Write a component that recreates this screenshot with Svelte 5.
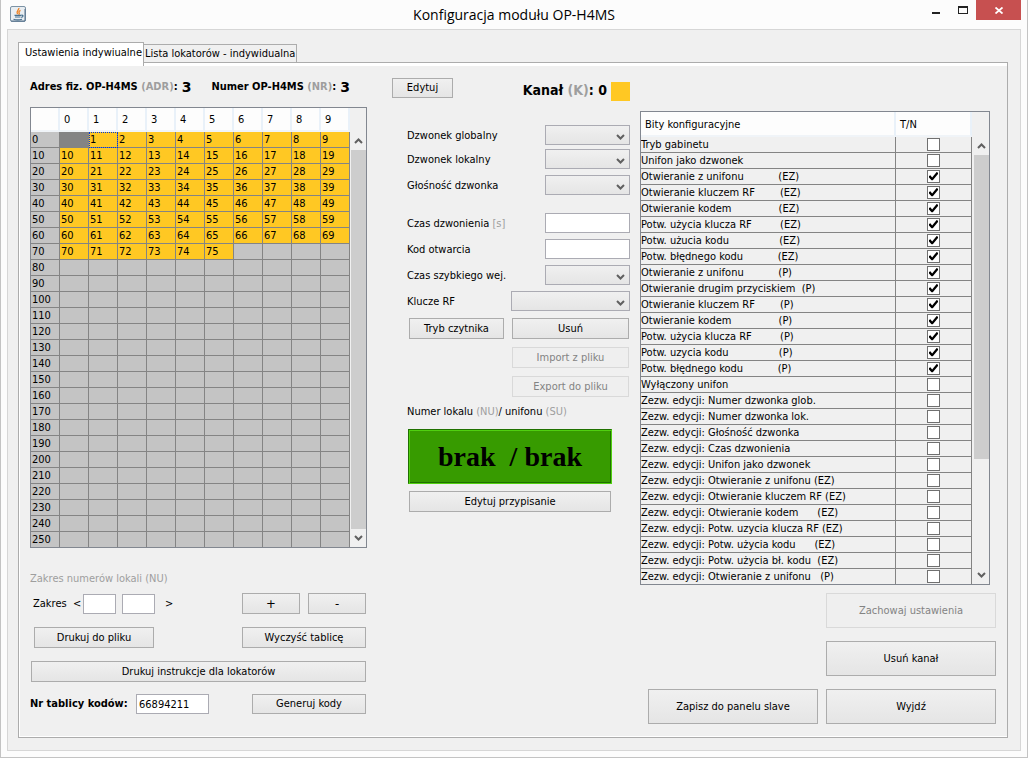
<script lang="ts">
  type Bit = { label: string; on: boolean };

  const COLUMNS = [0, 1, 2, 3, 4, 5, 6, 7, 8, 9];
  const ROWS = Array.from({ length: 26 }, (_, i) => i * 10);
  const LAST_USED = 75;

  let selected = $state(1);
  let activeTab = $state(0);
  let rangeFrom = $state("");
  let rangeTo = $state("");
  let codeTable = $state("66894211");
  let ringTime = $state("");
  let openCode = $state("");

  const tabs = ["Ustawienia indywiualne", "Lista lokatorów - indywidualna"];

  let bits = $state<Bit[]>([
    { label: "Tryb gabinetu", on: false },
    { label: "Unifon jako dzwonek", on: false },
    { label: "Otwieranie z unifonu           (EZ)", on: true },
    { label: "Otwieranie kluczem RF        (EZ)", on: true },
    { label: "Otwieranie kodem               (EZ)", on: true },
    { label: "Potw. użycia klucza RF         (EZ)", on: true },
    { label: "Potw. użucia kodu                (EZ)", on: true },
    { label: "Potw. błędnego kodu           (EZ)", on: true },
    { label: "Otwieranie z unifonu           (P)", on: true },
    { label: "Otwieranie drugim przyciskiem  (P)", on: true },
    { label: "Otwieranie kluczem RF        (P)", on: true },
    { label: "Otwieranie kodem               (P)", on: true },
    { label: "Potw. użycia klucza RF         (P)", on: true },
    { label: "Potw. uzycia kodu                (P)", on: true },
    { label: "Potw. błędnego kodu           (P)", on: true },
    { label: "Wyłączony unifon", on: false },
    { label: "Zezw. edycji: Numer dzwonka glob.", on: false },
    { label: "Zezw. edycji: Numer dzwonka lok.", on: false },
    { label: "Zezw. edycji: Głośność dzwonka", on: false },
    { label: "Zezw. edycji: Czas dzwonienia", on: false },
    { label: "Zezw. edycji: Unifon jako dzwonek", on: false },
    { label: "Zezw. edycji: Otwieranie z unifonu (EZ)", on: false },
    { label: "Zezw. edycji: Otwieranie kluczem RF (EZ)", on: false },
    { label: "Zezw. edycji: Otwieranie kodem      (EZ)", on: false },
    { label: "Zezw. edycji: Potw. uzycia klucza RF (EZ)", on: false },
    { label: "Zezw. edycji: Potw. użycia kodu      (EZ)", on: false },
    { label: "Zezw. edycji: Potw. użycia bł. kodu  (EZ)", on: false },
    { label: "Zezw. edycji: Otwieranie z unifonu   (P)", on: false },
  ]);

  const isUsed = (n: number): boolean => n > 0 && n <= LAST_USED;
</script>

{#snippet scrollbar(kind: string)}
  <div class="scrollbar">
    <button type="button" class="scroll-btn" aria-label="W górę">
      <svg width="9" height="6" viewBox="0 0 9 6"><path d="M1 5 4.500 1.500 8 5" fill="none" stroke="#606060" stroke-width="2" /></svg>
    </button>
    <div class="scroll-track"><div class="scroll-thumb {kind}"></div></div>
    <button type="button" class="scroll-btn" aria-label="W dół">
      <svg width="9" height="6" viewBox="0 0 9 6"><path d="M1 1 4.500 4.500 8 1" fill="none" stroke="#606060" stroke-width="2" /></svg>
    </button>
  </div>
{/snippet}

<div class="window">
  <header class="titlebar">
    <svg class="app-icon" width="16" height="16" viewBox="0 0 16 16">
      <rect x="0.500" y="0.500" width="15" height="15" rx="1.500" fill="#e9eef2" stroke="#7c93a6" />
      <path d="M1 15h14V3" fill="none" stroke="#54708a" />
      <path d="M8.800 2C9.500 4 5.500 4.800 7.500 8.200M10.500 4.300C8.500 5.300 8.800 6.500 9.300 7.300 9.500 7.900 9 8.300 8.500 8.600" fill="none" stroke="#ee8426" stroke-width="1.400" />
      <path d="M4.500 9.300h6.500M5 11h5.500M3.500 13.200c2.500.8 6 .8 8.500 0M11.200 9.300c2.500-.6 2.300 1.900 0 2" fill="none" stroke="#47708f" stroke-width="1.200" />
    </svg>
    <h1>Konfiguracja modułu OP-H4MS</h1>
    <div class="controls">
      <button type="button" aria-label="Minimalizuj">
        <svg width="10" height="8" viewBox="0 0 10 8"><path d="M1 6h8v2H1z" fill="#222" /></svg>
      </button>
      <button type="button" aria-label="Maksymalizuj">
        <svg width="10" height="8" viewBox="0 0 10 8"><path d="M0 0h10v8H0zM1 2v5h8V2z" fill="#222" fill-rule="evenodd" /></svg>
      </button>
      <button type="button" class="close" aria-label="Zamknij">
        <svg width="8" height="7" viewBox="0 0 8 7"><path d="M.5.500 7.500 6.500M7.500.500.5 6.500" stroke="#fff" stroke-width="1.800" /></svg>
      </button>
    </div>
  </header>

  <main class="frame">
    <div class="tabs" role="tablist">
      {#each tabs as tab, i}
        <button type="button" role="tab" class="tab" class:tab--active={activeTab === i} aria-selected={activeTab === i} onclick={() => (activeTab = i)}>{tab}</button>
      {/each}
    </div>

    <div class="panel">
      <section class="left">
        <div class="address">
          <span>Adres fiz. OP-H4MS <i>(ADR)</i>:</span>
          <b>3</b>
          <span class="number">Numer OP-H4MS <i>(NR)</i>:</span>
          <b>3</b>
        </div>

        <div class="table-box">
          <table class="locals">
            <thead>
              <tr>
                <th></th>
                {#each COLUMNS as col}
                  <th scope="col">{col}</th>
                {/each}
              </tr>
            </thead>
            <tbody>
              {#each ROWS as row}
                <tr>
                  <th scope="row">{row}</th>
                  {#each COLUMNS as col}
                    {@const n = row + col}
                    <td class:used={isUsed(n)} class:blocked={n === 0} class:selected={n === selected} onclick={() => (selected = n)}>{isUsed(n) ? n : ""}</td>
                  {/each}
                </tr>
              {/each}
            </tbody>
          </table>
          {@render scrollbar("thumb-full")}
        </div>

        <p class="range-title">Zakres numerów lokali (NU)</p>
        <div class="line range">
          <label for="range-from">Zakres&nbsp; &lt;</label>
          <input id="range-from" type="text" class="short" bind:value={rangeFrom} />
          <input type="text" class="short" aria-label="Zakres do" bind:value={rangeTo} />
          <span class="gt">&gt;</span>
          <div class="pair">
            <button type="button" class="btn sign">+</button>
            <button type="button" class="btn sign">-</button>
          </div>
        </div>
        <div class="line print">
          <button type="button" class="btn to-file">Drukuj do pliku</button>
          <button type="button" class="btn clear">Wyczyść tablicę</button>
        </div>
        <div class="line instructions">
          <button type="button" class="btn wide">Drukuj instrukcje dla lokatorów</button>
        </div>
        <div class="line codes">
          <label for="code-table">Nr tablicy kodów:</label>
          <input id="code-table" type="text" bind:value={codeTable} />
          <button type="button" class="btn generate">Generuj kody</button>
        </div>
      </section>

      <section class="middle">
        <div class="channel">
          <button type="button" class="btn edit">Edytuj</button>
          <span class="channel-name">Kanał <i>(K)</i>: 0</span>
          <span class="swatch"></span>
        </div>

        <div class="form">
          <div class="field">
            <label for="ring-global">Dzwonek globalny</label>
            <select id="ring-global"></select>
          </div>
          <div class="field tight">
            <label for="ring-local">Dzwonek lokalny</label>
            <select id="ring-local"></select>
          </div>
          <div class="field">
            <label for="ring-volume">Głośność dzwonka</label>
            <select id="ring-volume"></select>
          </div>
          <div class="field apart">
            <label for="ring-time">Czas dzwonienia <i>[s]</i></label>
            <input id="ring-time" type="text" bind:value={ringTime} />
          </div>
          <div class="field">
            <label for="open-code">Kod otwarcia</label>
            <input id="open-code" type="text" bind:value={openCode} />
          </div>
          <div class="field">
            <label for="quick-time">Czas szybkiego wej.</label>
            <select id="quick-time"></select>
          </div>
          <div class="field">
            <label for="rf-keys">Klucze RF</label>
            <select id="rf-keys" class="long"></select>
          </div>

          <div class="keys">
            <button type="button" class="btn">Tryb czytnika</button>
            <button type="button" class="btn">Usuń</button>
            <button type="button" class="btn second" disabled>Import z pliku</button>
            <button type="button" class="btn second" disabled>Export do pliku</button>
          </div>

          <p class="assign-title">Numer lokalu <i>(NU)</i>/ unifonu <i>(SU)</i></p>
          <div class="display">brak&nbsp; / brak</div>
          <button type="button" class="btn assign">Edytuj przypisanie</button>
        </div>
      </section>

      <section class="right">
        <div class="table-box bits-box">
          <table class="bits">
            <thead>
              <tr>
                <th scope="col">Bity konfiguracyjne</th>
                <th scope="col" class="flag">T/N</th>
              </tr>
            </thead>
            <tbody>
              {#each bits as bit, i}
                <tr>
                  <td><label for="bit-{i}">{bit.label}</label></td>
                  <td class="flag"><input id="bit-{i}" type="checkbox" bind:checked={bit.on} /></td>
                </tr>
              {/each}
            </tbody>
          </table>
          {@render scrollbar("thumb-part")}
        </div>

        <div class="actions">
          <button type="button" class="btn second" disabled>Zachowaj ustawienia</button>
          <button type="button" class="btn second">Usuń kanał</button>
          <button type="button" class="btn">Zapisz do panelu slave</button>
          <button type="button" class="btn">Wyjdź</button>
        </div>
      </section>
    </div>
  </main>
</div>

<style>
  :global(body) {
    background: #fcfcfc;
  }

  .window {
    box-sizing: border-box;
    min-height: 100vh;
    display: flex;
    flex-direction: column;
    padding: 0 6px 6px;
    border: 1px solid #c3c3c3;
    border-top: none;
    background: #fcfcfc;
    color: #000;
    font-family: Tahoma, "DejaVu Sans Condensed", "DejaVu Sans", sans-serif;
    font-size: 11px;
    line-height: 14px;
  }

  .window * {
    box-sizing: border-box;
  }

  button,
  input,
  select {
    margin: 0;
    font: inherit;
    color: inherit;
  }

  i {
    font-style: normal;
    color: #9e9e9e;
  }

  p {
    margin: 0;
  }

  .titlebar {
    height: 29px;
    display: grid;
    grid-template-columns: 1fr auto 1fr;
    align-items: center;
  }

  .app-icon {
    margin: 0 0 2px 3px;
  }

  h1 {
    margin: 0;
    font-family: "Segoe UI", "Open Sans", sans-serif;
    font-size: 14px;
    line-height: 28px;
    font-weight: 400;
  }

  .controls {
    display: flex;
    align-self: start;
    justify-content: flex-end;
  }

  .controls button {
    width: 27px;
    height: 20px;
    padding: 0;
    border: none;
    background: transparent;
  }

  .controls svg {
    display: block;
    margin: 0 auto;
  }

  .controls .close {
    width: 45px;
    background: #c75050;
  }

  .frame {
    flex: 1;
    display: flex;
    flex-direction: column;
    padding: 12px 12px 12px 10px;
    border: 1px solid #d6d6d6;
    background: #f0f0f0;
  }

  .tabs {
    display: flex;
    align-items: flex-end;
    height: 20px;
  }

  .tab {
    height: 18px;
    padding: 0 1px;
    border: 1px solid #acacac;
    border-width: 1px 1px 0 0;
    background: #f0f0f0;
    white-space: nowrap;
  }

  .tab--active {
    z-index: 1;
    height: 24px;
    margin-bottom: -4px;
    padding: 0 1px 4px 6px;
    border-width: 1px 1px 0 1px;
    background: #fff;
  }

  .panel {
    flex: 1;
    display: grid;
    grid-template-columns: minmax(0, 362fr) minmax(0, 248fr) minmax(0, 356fr);
    padding: 0 11px 12px;
    border: 1px solid #acacac;
    box-shadow: inset 0 3px #fff, inset 1px -1px #fff;
  }

  .left {
    padding-right: 25px;
  }

  .middle {
    padding-right: 10px;
  }

  .address {
    display: flex;
    align-items: center;
    height: 20px;
    margin: 14px 0 10px;
    font-weight: 700;
    white-space: nowrap;
  }

  .address b {
    margin-left: 4px;
    font-family: "DejaVu Sans", sans-serif;
    font-size: 14px;
  }

  .address .number {
    margin-left: 20px;
  }

  .table-box {
    display: flex;
    border: 1px solid #828790;
  }

  table {
    flex: 1;
    width: 100%;
    min-width: 0;
    table-layout: fixed;
    border-collapse: separate;
    border-spacing: 0;
  }

  th {
    padding: 0;
    font-weight: 400;
    text-align: left;
  }

  thead th {
    height: 24px;
    padding: 2px 0 0 4px;
    border-right: 2px solid #e9f1f9;
    border-bottom: 2px solid #f0f4f8;
    background: #fdfdfd;
  }

  tbody td,
  tbody th {
    height: 16px;
    padding: 0 1px;
    border-right: 1px solid #848484;
    border-bottom: 1px solid #848484;
    line-height: 15px;
    white-space: pre;
    overflow: hidden;
  }

  tbody tr:last-child > * {
    height: 15px;
    border-bottom: none;
  }

  .locals tbody td,
  .locals tbody th {
    background: #c4c4c4;
  }

  .locals tbody .used {
    background: #ffc823;
  }

  .locals tbody .blocked {
    background: #848484;
  }

  .locals tbody .selected {
    outline: 1px dotted #0037dc;
    outline-offset: -1px;
  }

  .scrollbar {
    flex: none;
    width: 16px;
    display: flex;
    flex-direction: column;
    padding-top: 24px;
  }

  .scroll-btn {
    display: flex;
    align-items: center;
    justify-content: center;
    height: 18px;
    padding: 0;
    border: none;
    background: #f0f0f0;
  }

  .scroll-track {
    flex: 1;
    display: flex;
  }

  .scroll-thumb {
    flex: 1;
    margin-left: 1px;
    background: #cdcdcd;
  }

  .thumb-full {
    height: 100%;
  }

  .thumb-part {
    height: 74%;
  }

  .line {
    display: flex;
    align-items: center;
    padding-right: 1px;
  }

  .btn {
    height: 21px;
    padding: 0 4px;
    border: 1px solid #acacac;
    background: linear-gradient(#f0f0f0, #e5e5e5);
    white-space: nowrap;
  }

  .btn:disabled {
    border-color: #d9d9d9;
    background: #efefef;
    color: #838383;
  }

  input[type="text"],
  select {
    height: 20px;
    min-width: 0;
    padding: 0 2px;
    border: 1px solid #ababb3;
    border-radius: 0;
    background: #fff;
  }

  select {
    appearance: none;
    background: url("data:image/svg+xml,%3Csvg xmlns='http://www.w3.org/2000/svg' width='9' height='6'%3E%3Cpath d='M1 1 4.5 4.500 8 1' fill='none' stroke='%23606060' stroke-width='2'/%3E%3C/svg%3E") no-repeat right 4px top 8px,
      linear-gradient(#f0f0f0, #e5e5e5);
  }

  .range-title {
    margin-top: 24px;
    color: #9e9e9e;
  }

  .range {
    height: 21px;
    margin-top: 7px;
    padding-left: 3px;
  }

  .range label {
    flex: none;
    width: 50px;
    white-space: nowrap;
  }

  .range .short {
    width: 33px;
    margin-right: 6px;
  }

  .gt {
    margin-left: 4px;
  }

  .pair {
    display: flex;
    gap: 8px;
    margin-left: auto;
  }

  .sign {
    width: 58px;
    font-size: 13px;
  }

  .print {
    justify-content: space-between;
    margin-top: 13px;
    padding-left: 4px;
  }

  .to-file {
    width: 120px;
  }

  .clear {
    width: 124px;
  }

  .instructions {
    margin-top: 13px;
    padding-left: 1px;
  }

  .wide {
    flex: 1;
  }

  .codes {
    margin-top: 12px;
  }

  .codes label {
    width: 106px;
    font-weight: 700;
    white-space: nowrap;
  }

  .codes input {
    width: 73px;
  }

  .generate {
    width: 114px;
    height: 20px;
    margin-left: auto;
  }

  .channel {
    display: flex;
    align-items: center;
    height: 24px;
    margin-top: 15px;
  }

  .edit {
    width: 61px;
    height: 20px;
    margin-bottom: 4px;
  }

  .channel-name {
    margin-left: auto;
    font-size: 14px;
    font-weight: 700;
    white-space: nowrap;
  }

  .swatch {
    width: 19px;
    height: 19px;
    margin: 2px 0 0 4px;
    background: #ffc823;
  }

  .form {
    padding-top: 17px;
    padding-left: 15px;
  }

  .field {
    display: flex;
    align-items: center;
    justify-content: space-between;
    margin-top: 6px;
    white-space: nowrap;
  }

  .field.tight {
    margin-top: 4px;
  }

  .field.apart {
    margin-top: 18px;
  }

  .field label {
    padding-top: 2px;
  }

  .field input,
  .field select {
    width: 85px;
  }

  .field .long {
    width: 119px;
  }

  .keys {
    display: grid;
    grid-template-columns: 95fr 117fr;
    gap: 8px;
    margin: 7px 1px 0 2px;
  }

  .keys .second {
    grid-column: 2;
  }

  .assign-title {
    margin-top: 8px;
    white-space: nowrap;
  }

  .display {
    height: 55px;
    margin: 10px 18px 0 1px;
    border: 1px solid #1f7000;
    border-right-color: #50d010;
    border-bottom-color: #50d010;
    box-shadow: inset 1px 1px #50d010, inset -1px -1px #1f7000;
    background: #379b00;
    font: 700 28px/53px "Liberation Serif", serif;
    text-align: center;
  }

  .assign {
    display: block;
    width: 202px;
    margin: 7px 0 0 2px;
  }

  .bits-box {
    margin: 48px 6px 0 0;
  }

  .bits-box thead th {
    height: 25px;
  }

  .bits .flag {
    width: 76px;
  }

  .bits tbody td {
    padding-left: 0;
  }

  .bits tbody .flag {
    padding: 0;
    text-align: center;
  }

  .bits-box :global(.scrollbar) {
    width: 17px;
    padding-top: 25px;
    padding-left: 1px;
  }

  input[type="checkbox"] {
    appearance: none;
    display: block;
    width: 13px;
    height: 13px;
    margin: 0 auto;
    border: 1px solid #707070;
    background: #fff;
  }

  input[type="checkbox"]:checked::before {
    content: "";
    display: block;
    width: 9px;
    height: 9px;
    margin: 1px;
    background: #000;
    clip-path: polygon(0 45%, 15% 35%, 35% 60%, 85% 0, 100% 8%, 100% 22%, 42% 92%, 28% 92%, 0 60%);
  }

  .actions {
    display: grid;
    grid-template-columns: 1fr 1fr;
    gap: 13px 8px;
    margin-top: 8px;
    padding-left: 8px;
  }

  .actions .btn {
    height: 35px;
  }

  .actions .second {
    grid-column: 2;
  }
</style>
